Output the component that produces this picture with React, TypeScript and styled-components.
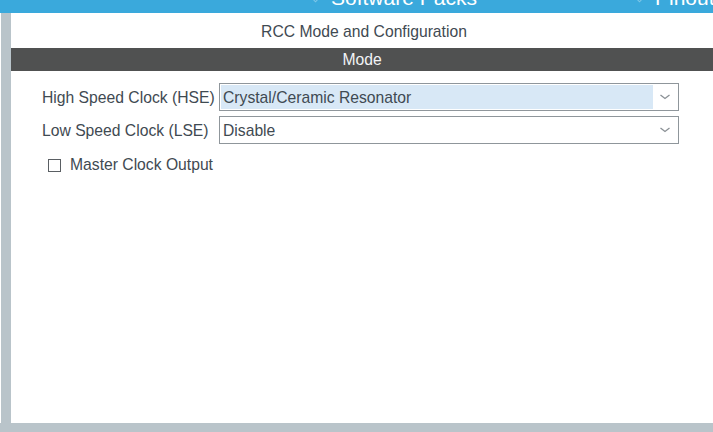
import React from "react";
import styled, { createGlobalStyle } from "styled-components";

const Global = createGlobalStyle`
  html, body { margin: 0; padding: 0; background: #ffffff; }
  body { font-family: "Liberation Sans", Arial, sans-serif; }
  #root { width: 713px; height: 432px; overflow: hidden; }
`;

const Page = styled.div`
  width: 713px;
  height: 432px;
  display: flex;
  flex-direction: column;
  background: #ffffff;
  overflow: hidden;
`;

const TopBar = styled.div`
  height: 13px;
  flex: 0 0 13px;
  background: #3aa9dc;
  position: relative;
  overflow: hidden;
`;

const TabLabel = styled.div<{ $left: number }>`
  position: absolute;
  left: ${(p) => p.$left}px;
  top: -14px;
  display: flex;
  align-items: flex-start;
  gap: 12px;
  color: #ffffff;
  font-size: 21px;
  line-height: 24px;
  white-space: nowrap;
`;

const TabMark = styled.span`
  display: block;
  width: 6px;
  height: 6px;
  margin-top: 8px;
  border-right: 1.5px solid rgba(255, 255, 255, 0.35);
  border-bottom: 1.5px solid rgba(255, 255, 255, 0.35);
  transform: rotate(45deg);
`;

const Body = styled.div`
  flex: 1;
  display: flex;
  padding-left: 1px;
`;

const SideStrip = styled.div`
  width: 10px;
  flex: 0 0 10px;
  background: #b9c4ca;
`;

const Main = styled.div`
  flex: 1;
  display: flex;
  flex-direction: column;
`;

const Content = styled.div`
  flex: 1;
  display: flex;
  flex-direction: column;
`;

const BottomBar = styled.div`
  height: 9px;
  flex: 0 0 9px;
  background: #b9c4ca;
  margin-left: -11px;
`;

const Title = styled.div`
  height: 35px;
  display: flex;
  align-items: center;
  justify-content: center;
  padding-top: 3px;
  box-sizing: border-box;
  color: #3f4a52;
  font-size: 15.7px;
  padding-left: 4px;
`;

const SectionBar = styled.div`
  height: 23px;
  box-sizing: border-box;
  padding-top: 1px;
  background: #505151;
  color: #f2f4f6;
  font-size: 15.7px;
  display: flex;
  align-items: center;
  justify-content: center;
`;

const Form = styled.div`
  display: flex;
  flex-direction: column;
  padding: 12px 0 0 31px;
  gap: 5px;
`;

const Row = styled.div`
  display: flex;
  align-items: center;
  height: 28px;
`;

const Label = styled.div`
  width: 177px;
  padding-top: 1px;
  color: #3f4a52;
  font-size: 15.7px;
  white-space: nowrap;
`;

const Select = styled.div`
  width: 460px;
  height: 28px;
  box-sizing: border-box;
  border: 1px solid #8f969b;
  display: flex;
  align-items: stretch;
  background: #ffffff;
  padding: 1px;
`;

const SelectValue = styled.div<{ $highlight?: boolean }>`
  flex: 1;
  background: ${(p) => (p.$highlight ? "#d8e8f6" : "#ffffff")};
  color: #3f4a52;
  font-size: 15.7px;
  display: flex;
  align-items: center;
  padding: 1px 0 0 2px;
`;

const Arrow = styled.div`
  width: 24px;
  display: flex;
  align-items: center;
  justify-content: center;
`;

const CheckRow = styled.label`
  display: flex;
  align-items: center;
  gap: 9px;
  margin-top: 7px;
  padding-left: 6px;
  color: #3f4a52;
  font-size: 15.7px;
`;

const Box = styled.span`
  width: 13px;
  height: 13px;
  box-sizing: border-box;
  border: 1px solid #5a5f63;
  background: #fff;
`;

const Chevron = () => (
  <svg width="12" height="8" viewBox="0 0 12 8">
    <path d="M1.5 2 L6 5.5 L10.5 2" fill="none" stroke="#8a9095" strokeWidth="1.3" />
  </svg>
);

export default function App() {
  return (
    <Page>
      <Global />
      <TopBar>
        <TabLabel $left={312}>
          <TabMark />
          <span>Software Packs</span>
        </TabLabel>
        <TabLabel $left={636}>
          <TabMark />
          <span>Pinout</span>
        </TabLabel>
      </TopBar>
      <Body>
        <SideStrip />
        <Main>
          <Content>
            <Title>RCC Mode and Configuration</Title>
            <SectionBar>Mode</SectionBar>
            <Form>
              <Row>
                <Label>High Speed Clock (HSE)</Label>
                <Select>
                  <SelectValue $highlight>Crystal/Ceramic Resonator</SelectValue>
                  <Arrow>
                    <Chevron />
                  </Arrow>
                </Select>
              </Row>
              <Row>
                <Label>Low Speed Clock (LSE)</Label>
                <Select>
                  <SelectValue>Disable</SelectValue>
                  <Arrow>
                    <Chevron />
                  </Arrow>
                </Select>
              </Row>
              <CheckRow>
                <Box />
                <span>Master Clock Output</span>
              </CheckRow>
            </Form>
          </Content>
          <BottomBar />
        </Main>
      </Body>
    </Page>
  );
}
